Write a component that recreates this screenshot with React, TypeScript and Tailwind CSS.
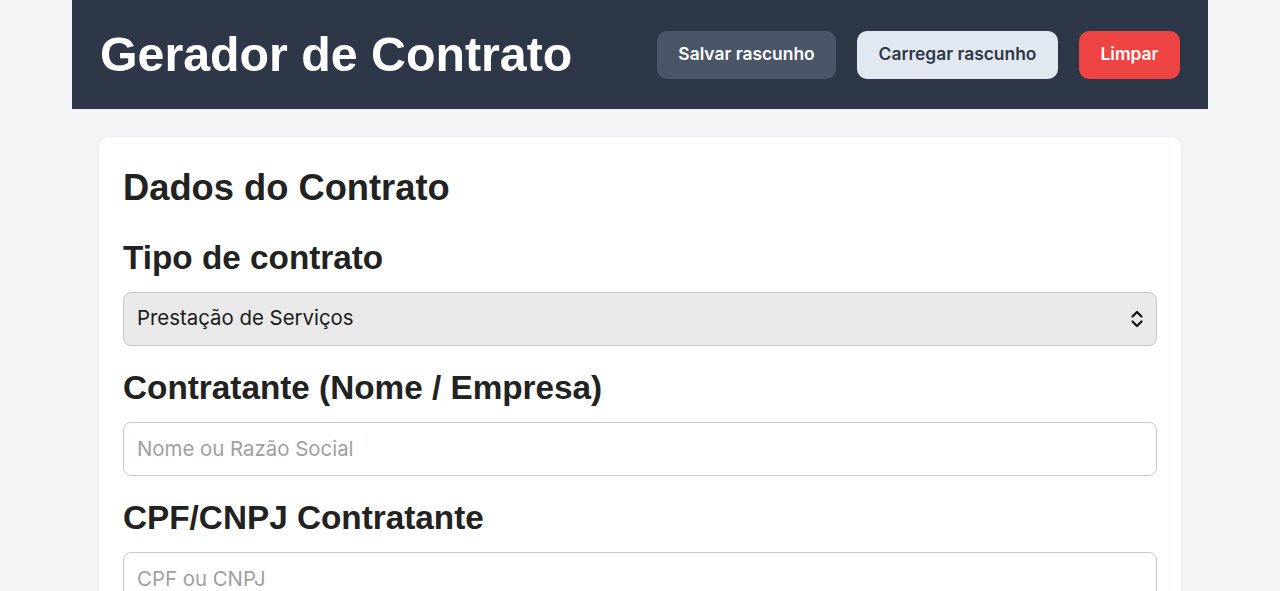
import React from "react";

export default function App() {
  return (
    <div className="min-h-[591px] bg-[#f3f4f6]" style={{ fontFamily: '"Liberation Sans", Arial, sans-serif' }}>
      <div className="mx-auto w-[1136px]">
        <header className="flex h-[109px] items-center justify-between bg-[#2d3748] px-7">
          <h1 className="text-[48.3px] font-bold leading-none text-white">Gerador de Contrato</h1>
          <div className="flex items-center gap-[21px] font-['Inter',sans-serif] text-[17.4px] font-semibold">
            <button className="h-[48px] w-[179px] rounded-[10px] bg-[#4a5568] text-white">Salvar rascunho</button>
            <button className="h-[48px] w-[201px] rounded-[10px] bg-[#e2e8f0] text-[#2d3748]">Carregar rascunho</button>
            <button className="h-[48px] w-[101px] rounded-[10px] bg-[#ef4444] text-white">Limpar</button>
          </div>
        </header>
        <main className="px-[27px] pt-[28px]">
          <section className="rounded-[10px] bg-white px-6 pb-10 pt-[29px] shadow-[0_1px_4px_rgba(0,0,0,0.06)]">
            <h2 className="mb-[28px] text-[36.3px] font-bold leading-[1.2] text-[#222]">Dados do Contrato</h2>

            <label className="mb-[14px] block text-[33.3px] font-bold leading-[40px] text-[#222]">Tipo de contrato</label>
            <div className="relative mb-[22px]">
              <select
                defaultValue="servicos"
                className="h-[54px] w-full appearance-none rounded-[8px] border border-[#c6c6c6] bg-[#e9e9e9] px-[13px] font-['Inter',sans-serif] text-[20.4px] text-[#1a1a1a] outline-none"
              >
                <option value="servicos">Prestação de Serviços</option>
              </select>
              <svg
                className="pointer-events-none absolute right-[13px] top-1/2 -translate-y-1/2"
                width="14"
                height="20"
                viewBox="0 0 14 20"
                fill="none"
                stroke="#111"
                strokeWidth="2.2"
                strokeLinecap="round"
                strokeLinejoin="round"
              >
                <path d="M2.5 7.5 L7 3 L11.5 7.5" />
                <path d="M2.5 12.5 L7 17 L11.5 12.5" />
              </svg>
            </div>

            <label className="mb-[14px] block text-[33.3px] font-bold leading-[40px] text-[#222]">Contratante (Nome / Empresa)</label>
            <input
              placeholder="Nome ou Razão Social"
              className="mb-[22px] h-[54px] w-full rounded-[8px] border border-[#c9c9c9] bg-white px-[13px] font-['Inter',sans-serif] text-[20.4px] text-[#1a1a1a] outline-none placeholder:text-[#a0a0a0]"
            />

            <label className="mb-[14px] block text-[33.3px] font-bold leading-[40px] text-[#222]">CPF/CNPJ Contratante</label>
            <input
              placeholder="CPF ou CNPJ"
              className="mb-[22px] h-[54px] w-full rounded-[8px] border border-[#c9c9c9] bg-white px-[13px] font-['Inter',sans-serif] text-[20.4px] text-[#1a1a1a] outline-none placeholder:text-[#a0a0a0]"
            />
          </section>
        </main>
      </div>
    </div>
  );
}
